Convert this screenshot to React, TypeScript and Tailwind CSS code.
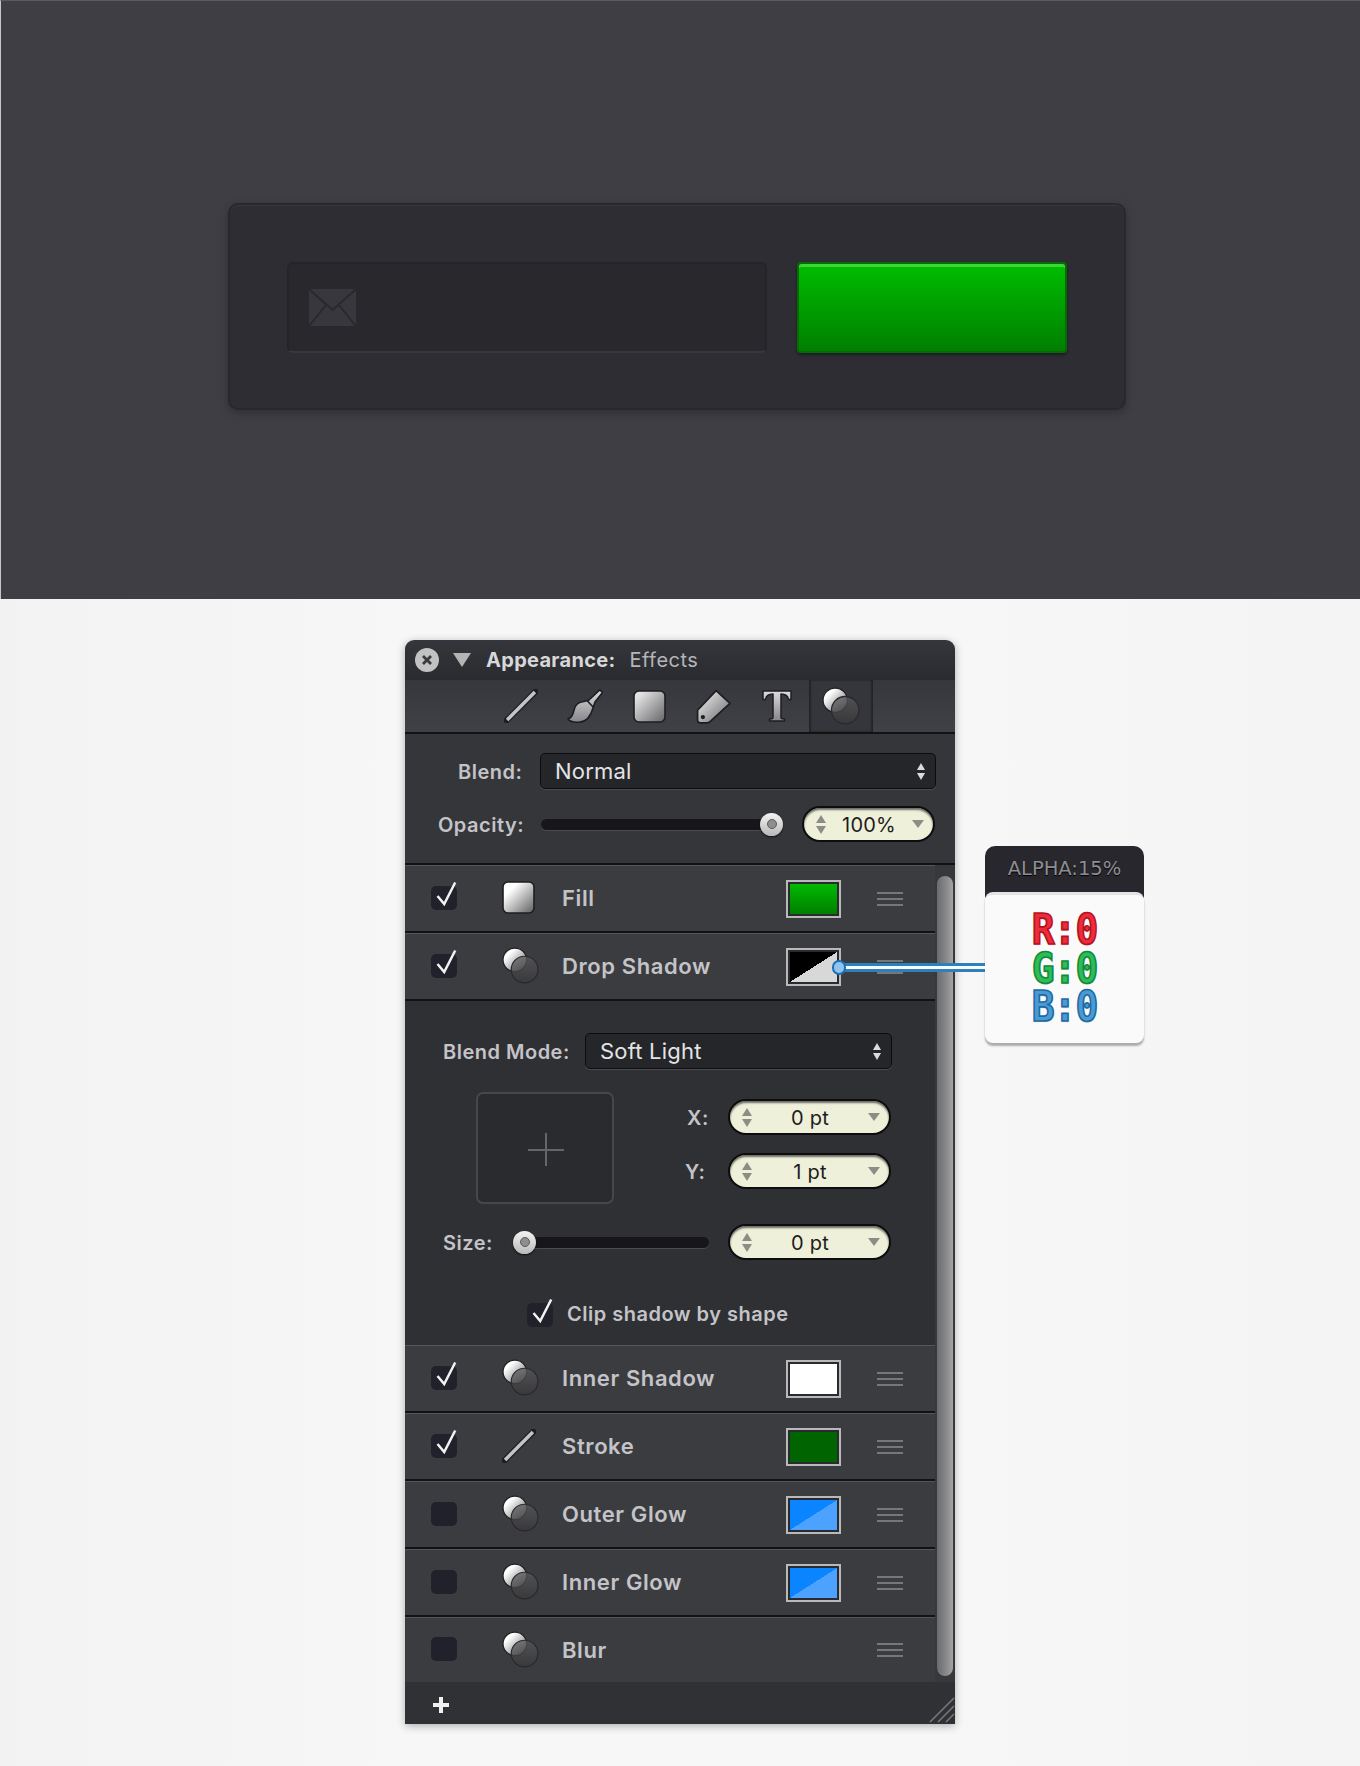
import type { ReactNode } from 'react';

type Effect = { name: string; on: boolean; icon: 'fill' | 'fx' | 'stroke'; swatch?: string };

const TOP_EFFECTS: Effect[] = [
  { name: 'Fill', on: true, icon: 'fill', swatch: 'bg-[linear-gradient(#00b900,#008000)]' },
  { name: 'Drop Shadow', on: true, icon: 'fx', swatch: 'bg-[linear-gradient(to_bottom_right,#000_50%,#d8d8d8_50%)]' },
];

const BOTTOM_EFFECTS: Effect[] = [
  { name: 'Inner Shadow', on: true, icon: 'fx', swatch: 'bg-white' },
  { name: 'Stroke', on: true, icon: 'stroke', swatch: 'bg-[#006400]' },
  { name: 'Outer Glow', on: false, icon: 'fx', swatch: 'bg-[linear-gradient(to_bottom_right,#0a84ff_50%,#4da2ff_50%)]' },
  { name: 'Inner Glow', on: false, icon: 'fx', swatch: 'bg-[linear-gradient(to_bottom_right,#0a84ff_50%,#4da2ff_50%)]' },
  { name: 'Blur', on: false, icon: 'fx' },
];

function Gradients() {
  return (
    <svg width="0" height="0" className="absolute">
      <defs>
        <linearGradient id="metal" x1="0" y1="0" x2="1" y2="1">
          <stop offset="0.15" stopColor="#e2e2e2" />
          <stop offset="0.95" stopColor="#6c6c70" />
        </linearGradient>
        <linearGradient id="glossy" x1="0" y1="0" x2="1" y2="1">
          <stop offset="0.25" stopColor="#ffffff" />
          <stop offset="1" stopColor="#5c5c5e" />
        </linearGradient>
        <linearGradient id="metalV" x1="0" y1="0" x2="0" y2="1">
          <stop offset="0" stopColor="#dcdcdc" />
          <stop offset="1" stopColor="#85858a" />
        </linearGradient>
        <linearGradient id="smoke" x1="0" y1="0" x2="0" y2="1">
          <stop offset="0" stopColor="#5a5a5c" />
          <stop offset="1" stopColor="#38383a" />
        </linearGradient>
      </defs>
    </svg>
  );
}

function CirclesIcon({ size = 37 }: { size?: number }) {
  return (
    <svg width={size} height={size} viewBox="0 0 36 36">
      <circle cx="12.5" cy="12.5" r="11.5" fill="url(#glossy)" stroke="#202024" strokeWidth="1.2" />
      <circle cx="22" cy="22" r="13" fill="url(#smoke)" fillOpacity="0.74" stroke="#2a2a2d" strokeWidth="1.2" />
    </svg>
  );
}

function SquareIcon({ size = 33, fill = 'metal' }: { size?: number; fill?: string }) {
  return (
    <svg width={size} height={size} viewBox="0 0 33 33">
      <rect x="1" y="1" width="31" height="31" rx="5" fill={`url(#${fill})`} stroke="#1e1e22" strokeWidth="1.6" />
    </svg>
  );
}

function LineIcon({ size = 34 }: { size?: number }) {
  return (
    <svg width={size} height={size} viewBox="0 0 33 33">
      <path d="M2.5 30.5 L30.5 2.5" stroke="#1e1e22" strokeWidth="6" strokeLinecap="round" />
      <path d="M3 30 L30 3" stroke="#c4c4c6" strokeWidth="3.4" />
    </svg>
  );
}

function BrushIcon() {
  return (
    <svg width="36" height="34" viewBox="0 0 36 34">
      <path
        d="M32.7 .8 L35.5 3.5 L28 13 L26 19 C24 26 20 32.5 13 33 C8 33.5 3 33 1 30 C4 29 6 26 7 21 C8 16 12 13 17 12.5 L22 11 Z"
        fill="url(#metalV)"
        stroke="#1e1e22"
        strokeWidth="1.6"
        strokeLinejoin="round"
      />
      <path d="M20 11.5 L26.5 18.5" stroke="#1e1e22" strokeWidth="1.6" />
    </svg>
  );
}

function TagIcon() {
  return (
    <svg width="35" height="35" viewBox="0 0 33 33">
      <path
        d="M19 1.5 L32 13.5 L13 31 Q12 32 10 32 L4 32 Q1.5 32 1.5 29.5 L1.5 20 Z"
        fill="url(#metal)"
        stroke="#1e1e22"
        strokeWidth="1.6"
        strokeLinejoin="round"
      />
      <circle cx="6.5" cy="26.5" r="2" fill="#1e1e22" />
    </svg>
  );
}

function TIcon() {
  return (
    <svg width="30" height="32" viewBox="0 0 30 32">
      <path
        d="M1 1 H29 V9.5 H26.5 C26 6 24.5 4 19 4 V27.5 C19 28.5 20 29 22.5 29 V31 H7.5 V29 C10 29 11 28.5 11 27.5 V4 C5.5 4 4 6 3.5 9.5 H1 Z"
        fill="url(#metalV)"
        stroke="#1e1e22"
        strokeWidth="1.5"
        strokeLinejoin="round"
      />
    </svg>
  );
}

function Checkbox({ on }: { on: boolean }) {
  return (
    <div className="relative h-[24px] w-[26px] shrink-0 rounded-[5px] bg-[#20212a]">
      {on && (
        <svg width="26" height="24" viewBox="0 0 26 24" className="absolute left-0 top-0 overflow-visible">
          <path d="M6.5 10 L13.2 18 L24.2 -3.5" fill="none" stroke="#f2f2f2" strokeWidth="2.5" />
        </svg>
      )}
    </div>
  );
}

function Swatch({ fill }: { fill: string }) {
  return (
    <div className="h-[38px] w-[55px] border-2 border-[#b9b9b9] bg-[#2a2b30] p-[2px]">
      <div className={`h-full w-full ${fill}`} />
    </div>
  );
}

function Grip() {
  return (
    <div className="flex w-[26px] flex-col gap-[4px]">
      <div className="h-[2px] bg-[#76777b]" />
      <div className="h-[2px] bg-[#76777b]" />
      <div className="h-[2px] bg-[#76777b]" />
    </div>
  );
}

function EffectRow({ effect, last }: { effect: Effect; last?: boolean }) {
  return (
    <div
      className={`flex items-center border-t border-[#55565b] bg-[#3b3c40] pl-[26px] ${
        last ? 'h-[65px]' : 'h-[68px] border-b-2 border-b-[#131316]'
      }`}
    >
      <div className="-mt-[2px] flex w-[71px] items-center">
        <Checkbox on={effect.on} />
      </div>
      <div className="-mt-[2px] flex w-[60px] items-center">
        {effect.icon === 'fill' && <SquareIcon fill="glossy" />}
        {effect.icon === 'fx' && <CirclesIcon />}
        {effect.icon === 'stroke' && <LineIcon />}
      </div>
      <span className="w-[224px] text-[22px] font-semibold tracking-[0.6px] text-[#c4c4c8]">{effect.name}</span>
      <div className="w-[91px]">{effect.swatch && <Swatch fill={effect.swatch} />}</div>
      <Grip />
    </div>
  );
}

function Updown() {
  return (
    <div className="flex flex-col gap-[3px]">
      <div className="h-0 w-0 border-x-[4px] border-b-[7px] border-x-transparent border-b-[#dcdcdc]" />
      <div className="h-0 w-0 border-x-[4px] border-t-[7px] border-x-transparent border-t-[#dcdcdc]" />
    </div>
  );
}

function SelectBox({ value, className }: { value: string; className: string }) {
  return (
    <div
      className={`flex h-[36px] items-center justify-between rounded-[5px] border border-[#0c0c0e] bg-[#25262a] pl-[14px] pr-[10px] text-[22px] tracking-[0.2px] text-[#e4e4e6] shadow-[0_1px_0_#4a4b50] ${className}`}
    >
      <span className="pt-[1px]">{value}</span>
      <Updown />
    </div>
  );
}

function Stepper({ value, className }: { value: string; className: string }) {
  return (
    <div
      className={`flex h-[36px] items-center rounded-full border-2 border-[#0d0d0f] bg-[#eff0da] pl-[12px] pr-[9px] shadow-[inset_0_2px_2px_rgba(0,0,0,0.55)] ${className}`}
    >
      <div className="flex flex-col gap-[3px]">
        <div className="h-0 w-0 border-x-[5px] border-b-[8px] border-x-transparent border-b-[#8d8d85]" />
        <div className="h-0 w-0 border-x-[5px] border-t-[8px] border-x-transparent border-t-[#8d8d85]" />
      </div>
      <span className="flex-1 pt-[1px] text-center text-[20px] tracking-[0.2px] text-[#1c1c1c]">{value}</span>
      <div className="h-0 w-0 border-x-[6px] border-t-[8px] border-x-transparent border-t-[#8d8d85]" />
    </div>
  );
}

function Slider({ value, className }: { value: 'min' | 'max'; className: string }) {
  return (
    <div className={`relative h-[11px] rounded-full bg-[#17171a] shadow-[0_1px_0_#4b4c50] ${className}`}>
      <div
        className={`absolute -top-[6px] flex h-[23px] w-[23px] items-center justify-center rounded-full bg-[linear-gradient(#f4f4f4,#b8b8b8)] shadow-[0_1px_2px_rgba(0,0,0,0.7)] ${
          value === 'max' ? '-right-[8px]' : '-left-[1px]'
        }`}
      >
        <div className="h-[10px] w-[10px] rounded-full border border-[#5b5b5b] bg-[#8e8e8e]" />
      </div>
    </div>
  );
}

function Label({ children, className = '' }: { children: ReactNode; className?: string }) {
  return <span className={`pt-[1px] text-[20px] font-semibold tracking-[0.5px] text-[#c4c4c8] ${className}`}>{children}</span>;
}

function ShadowSettings() {
  return (
    <div className="h-[344px] bg-[#2f3034] pt-[32px]">
      <div className="flex items-center pl-[38px]">
        <Label className="w-[142px]">Blend Mode:</Label>
        <SelectBox value="Soft Light" className="w-[307px]" />
      </div>

      <div className="mt-[23px] flex pl-[71px]">
        <div className="relative h-[112px] w-[138px] rounded-[7px] border-2 border-[#46474c] bg-[#2a2b2f]">
          <div className="absolute left-[50px] top-[55px] h-[1.5px] w-[36px] bg-[#65666a]" />
          <div className="absolute left-[67px] top-[39px] h-[33px] w-[1.5px] bg-[#65666a]" />
        </div>
        <div className="ml-[71px] flex flex-col gap-[18px] pt-[7px]">
          <div className="flex items-center">
            <Label className="w-[43px] pl-[2px]">X:</Label>
            <Stepper value="0 pt" className="w-[163px]" />
          </div>
          <div className="flex items-center">
            <Label className="w-[43px]">Y:</Label>
            <Stepper value="1 pt" className="w-[163px]" />
          </div>
        </div>
      </div>

      <div className="mt-[20px] flex items-center pl-[38px]">
        <Label className="w-[71px]">Size:</Label>
        <Slider value="min" className="w-[195px]" />
        <Stepper value="0 pt" className="ml-[19px] w-[163px]" />
      </div>

      <div className="mt-[40px] flex items-center pl-[122px]">
        <Checkbox on />
        <Label className="-mt-[2px] ml-[14px]">Clip shadow by shape</Label>
      </div>
    </div>
  );
}

function AppearancePanel() {
  return (
    <div className="w-[550px] overflow-hidden rounded-t-[9px] shadow-[0_2px_8px_rgba(0,0,0,0.3)]">
      <div className="flex h-[40px] items-center bg-[linear-gradient(#35363b,#2a2b2f)] pl-[10px]">
        <div className="flex h-[24px] w-[24px] items-center justify-center rounded-full bg-[#c2c2c2]">
          <svg width="12" height="12" viewBox="0 0 12 12">
            <path d="M2 2 L10 10 M10 2 L2 10" stroke="#3a3a3e" strokeWidth="2.8" />
          </svg>
        </div>
        <div className="ml-[14px] h-0 w-0 border-x-[9px] border-t-[14px] border-x-transparent border-t-[#b4b4b4]" />
        <span className="ml-[15px] text-[20px] font-bold tracking-[0.3px] text-[#d8d8da]">Appearance:</span>
        <span className="ml-[14px] text-[20px] tracking-[0.5px] text-[#b6b6ba]">Effects</span>
      </div>

      <div className="flex h-[54px] border-b-2 border-[#121215] bg-[linear-gradient(#36373c,#404147)] pl-[84px]">
        {[<LineIcon key="line" />, <BrushIcon key="brush" />, <SquareIcon key="square" />, <TagIcon key="tag" />, <TIcon key="t" />].map(
          icon => (
            <div key={icon.key} className="flex w-[64px] items-center justify-center">
              {icon}
            </div>
          ),
        )}
        <div className="flex w-[64px] items-center justify-center bg-[#35363b] shadow-[inset_2px_0_2px_rgba(0,0,0,0.35),inset_-2px_0_2px_rgba(0,0,0,0.35)]">
          <CirclesIcon size={38} />
        </div>
      </div>

      <div className="h-[131px] border-b-2 border-[#121215] bg-[#35363a] pt-[19px]">
        <div className="flex items-center pl-[53px]">
          <Label className="w-[82px]">Blend:</Label>
          <SelectBox value="Normal" className="w-[396px]" />
        </div>
        <div className="mt-[17px] flex items-center pl-[33px]">
          <Label className="w-[103px]">Opacity:</Label>
          <Slider value="max" className="w-[234px]" />
          <Stepper value="100%" className="ml-[27px] w-[133px]" />
        </div>
      </div>

      <div className="flex">
        <div className="w-[530px]">
          {TOP_EFFECTS.map(effect => (
            <EffectRow key={effect.name} effect={effect} />
          ))}
          <ShadowSettings />
          {BOTTOM_EFFECTS.map((effect, i) => (
            <EffectRow key={effect.name} effect={effect} last={i === BOTTOM_EFFECTS.length - 1} />
          ))}
        </div>
        <div className="w-[20px] bg-[#37383c] px-[2px] pb-[6px] pt-[11px]">
          <div className="h-full rounded-full bg-[linear-gradient(to_right,#6a6b6e,#8a8a8c_60%,#a4a4a6)]" />
        </div>
      </div>

      <div className="relative flex h-[42px] items-center bg-[#303135] pl-[28px] pt-[3px]">
        <svg width="16" height="16" viewBox="0 0 16 16">
          <path d="M8 0 V16 M0 8 H16" stroke="#f0f0f0" strokeWidth="4" />
        </svg>
        <svg width="26" height="26" viewBox="0 0 26 26" className="absolute bottom-[1px] right-0">
          <path d="M1 25 L25 1 M9 25 L25 9 M17 25 L25 17" stroke="#77787c" strokeWidth="1.6" />
        </svg>
      </div>
    </div>
  );
}

function ColorTip() {
  const channels = [
    { text: 'R:0', cls: 'text-[#ee2b3b] [-webkit-text-stroke:1.5px_#b5101f]' },
    { text: 'G:0', cls: 'text-[#2ebb58] [-webkit-text-stroke:1.5px_#0f8c3a]' },
    { text: 'B:0', cls: 'text-[#4a9ad4] [-webkit-text-stroke:1.5px_#1c6aa5]' },
  ];
  return (
    <div className="absolute left-[580px] top-[247px] w-[159px]">
      <div className="h-[52px] rounded-t-[10px] bg-[#27272d] pt-[9px] text-center font-['DejaVu_Sans',sans-serif] text-[19.5px] leading-[28px] text-[#8e8e92] [text-shadow:0_1px_1px_#000]">
        ALPHA:15%
      </div>
      <div className="relative -mt-[6px] h-[151px] rounded-[8px] border-t-[3px] border-[#e4e4e4] bg-[#fafafa] pt-[16px] shadow-[0_3px_2px_rgba(0,0,0,0.3)]">
        {channels.map(c => (
          <div
            key={c.text}
            className={`scale-y-[1.1] text-center font-['DejaVu_Sans_Mono',monospace] text-[38px] font-bold leading-[38.5px] tracking-[-1px] [text-shadow:0_1px_1px_rgba(0,0,0,0.25)] ${c.cls}`}
          >
            {c.text}
          </div>
        ))}
      </div>
      <div className="absolute -left-[146px] top-[117px] h-[9px] w-[146px] border-y-[3px] border-[#2f7fb8] bg-[#f4fbff]" />
      <div className="absolute -left-[153px] top-[114px] h-[15px] w-[14px] rounded-full border-2 border-[#1f6fb0] bg-[#8ec3f2]" />
    </div>
  );
}

export default function App() {
  return (
    <div className="min-h-[1766px] bg-[linear-gradient(to_right,#f2f2f2,#f7f7f7_30%,#f7f7f7_70%,#f4f4f4)] font-['Inter',sans-serif]">
      <Gradients />
      <div className="h-[599px] border-l border-t border-l-[#c8c8c8] border-t-[#5a5a60] bg-[#3f3e45] pl-[227px] pt-[202px]">
        <div className="flex h-[207px] w-[898px] rounded-[10px] border-2 border-[#28282d] bg-[#2e2d33] pl-[57px] pt-[57px] shadow-[0_3px_10px_rgba(0,0,0,0.25),inset_0_1px_0_#38383e]">
          <div className="flex h-[91px] w-[480px] items-center rounded-[6px] border-2 border-[#24242a] border-b-[#38383e] bg-[#28282d] pl-[20px]">
            <svg width="47" height="37" viewBox="0 0 47 37">
              <rect x="0" y="0" width="47" height="37" rx="3" fill="#37373d" />
              <path d="M1 1 L23.5 21 L46 1 M1 36 L17 16 M46 36 L30 16" fill="none" stroke="#28282d" strokeWidth="2" />
            </svg>
          </div>
          <div className="ml-[30px] h-[91px] w-[270px] rounded-[4px] border-2 border-[#056b05] bg-[linear-gradient(#00bd00,#007f00)] shadow-[inset_0_3px_0_#3ad63a,0_2px_3px_rgba(0,0,0,0.4)]" />
        </div>
      </div>
      <div className="relative ml-[405px] w-[550px] pt-[41px]">
        <AppearancePanel />
        <ColorTip />
      </div>
    </div>
  );
}
